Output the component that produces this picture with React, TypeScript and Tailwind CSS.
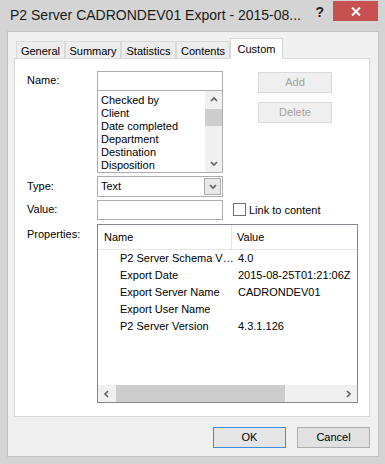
import React from "react";

const FONT = "font-['Liberation_Sans',Arial,sans-serif]";

function Chevron({ dir }: { dir: "up" | "down" | "left" | "right" }) {
  const paths: Record<string, string> = {
    up: "M1 5 L4 2 L7 5",
    down: "M1 2 L4 5 L7 2",
    left: "M5 1 L2 4 L5 7",
    right: "M2 1 L5 4 L2 7",
  };
  return (
    <svg width="8" height="8" viewBox="0 0 8 8">
      <path d={paths[dir]} fill="none" stroke="#606060" strokeWidth="1.6" />
    </svg>
  );
}

function Tab({ label, w, selected }: { label: string; w: string; selected?: boolean }) {
  if (selected) {
    return (
      <div
        className={`${w} h-[21px] bg-white border border-b-0 border-[#d9d9d9] flex items-start justify-center pt-[3px] leading-[14px] relative z-10`}
      >
        {label}
      </div>
    );
  }
  return (
    <div
      className={`${w} h-[18px] bg-[#ededed] border border-[#d9d9d9] flex items-start justify-center pt-[2px] leading-[14px]`}
    >
      {label}
    </div>
  );
}

function DisabledButton({ label }: { label: string }) {
  return (
    <div className="w-[74px] h-[21px] bg-[#efefef] border border-[#d9d9d9] flex items-center justify-center text-[#a3a3a3]">
      {label}
    </div>
  );
}

export default function App() {
  const listItems = ["Checked by", "Client", "Date completed", "Department", "Destination", "Disposition"];
  const rows: [string, string][] = [
    ["P2 Server Schema V…", "4.0"],
    ["Export Date", "2015-08-25T01:21:06Z"],
    ["Export Server Name", "CADRONDEV01"],
    ["Export User Name", ""],
    ["P2 Server Version", "4.3.1.126"],
  ];

  return (
    <div className={`w-[385px] h-[464px] bg-[#d4d4d4] flex flex-col ${FONT} text-[11px] text-black`}>
      {/* Title bar */}
      <div className="h-[31px] flex items-start shrink-0">
        <div className="pl-[10px] pt-[6px] text-[14px] leading-[18px] text-[#1a1a1a] whitespace-nowrap">
          P2 Server CADRONDEV01 Export - 2015-08...
        </div>
        <div className="ml-auto flex items-start">
          <div className="pt-[4px] text-[14px] leading-[16px] font-bold text-[#222]">?</div>
          <div className="ml-[9px] mr-[7px] mt-[1px] w-[45px] h-[20px] bg-[#c75050] flex items-center justify-center">
            <svg width="10" height="9" viewBox="0 0 10 9">
              <path d="M1 0.5 L9 8.5 M9 0.5 L1 8.5" stroke="#ffffff" strokeWidth="2" />
            </svg>
          </div>
        </div>
      </div>

      {/* Client area */}
      <div className="ml-[7px] mr-[6px] mb-[7px] flex-1 bg-[#f0f0f0] border border-[#c2c2c2] flex flex-col pl-[6px] pr-[7px] pt-[6px]">
        {/* Tabs */}
        <div className="flex items-end h-[21px] -mb-px ml-[2px]">
          <Tab label="General" w="w-[49px]" />
          <Tab label="Summary" w="w-[56px]" />
          <Tab label="Statistics" w="w-[55px]" />
          <Tab label="Contents" w="w-[54px]" />
          <Tab label="Custom" w="w-[53px]" selected />
        </div>

        {/* Tab panel */}
        <div className="w-[356px] h-[359px] bg-white border border-[#d9d9d9] pl-[12px] pt-[12px] flex flex-col">
          {/* Name row */}
          <div className="flex">
            <div className="w-[70px] pt-[2px] leading-[15px]">Name:</div>
            <div className="flex flex-col w-[126px]">
              <div className="h-[20px] border border-[#abadb3] bg-white" />
              <div className="h-[82px] border border-t-0 border-[#abadb3] flex">
                <div className="flex-1 pl-[3px] pt-[3px] flex flex-col">
                  {listItems.map((it) => (
                    <div key={it} className="h-[13px] leading-[13px] whitespace-nowrap">
                      {it}
                    </div>
                  ))}
                </div>
                <div className="w-[17px] bg-[#f0f0f0] flex flex-col">
                  <div className="h-[17px] flex items-center justify-center">
                    <Chevron dir="up" />
                  </div>
                  <div className="mt-[1px] h-[17px] bg-[#cdcdcd]" />
                  <div className="flex-1" />
                  <div className="h-[17px] flex items-center justify-center">
                    <Chevron dir="down" />
                  </div>
                </div>
              </div>
            </div>
            <div className="ml-[35px] mt-[1px] flex flex-col gap-[9px]">
              <DisabledButton label="Add" />
              <DisabledButton label="Delete" />
            </div>
          </div>

          {/* Type row */}
          <div className="flex mt-[3px]">
            <div className="w-[70px] pt-[3px] leading-[15px]">Type:</div>
            <div className="w-[126px] h-[21px] border border-[#abadb3] bg-white flex items-center">
              <div className="flex-1 pl-[3px] leading-[15px]">Text</div>
              <div className="w-[17px] h-[17px] mr-[1px] border border-[#acacac] bg-[#e8e8e8] flex items-center justify-center">
                <Chevron dir="down" />
              </div>
            </div>
          </div>

          {/* Value row */}
          <div className="flex mt-[3px]">
            <div className="w-[70px] pt-[2px] leading-[15px]">Value:</div>
            <div className="w-[126px] h-[20px] border border-[#abadb3] bg-white" />
            <div className="ml-[10px] mt-[3px] flex items-start">
              <div className="w-[13px] h-[13px] border border-[#707070] bg-white" />
              <div className="ml-[3px] leading-[14px]">Link to content</div>
            </div>
          </div>

          {/* Properties row */}
          <div className="flex mt-[4px]">
            <div className="w-[70px] pt-[3px] leading-[15px]">Properties:</div>
            <div className="w-[261px] h-[179px] border border-[#828790] bg-white flex flex-col">
              <div className="h-[25px] flex border-b border-[#e5e5e5] shrink-0">
                <div className="w-[134px] border-r border-[#e5e5e5] pl-[6px] flex items-center">Name</div>
                <div className="pl-[5px] flex items-center">Value</div>
              </div>
              <div className="flex flex-col">
                {rows.map(([n, v]) => (
                  <div key={n} className="h-[17px] flex items-center">
                    <div className="w-[140px] pl-[22px] pr-[4px] whitespace-nowrap overflow-hidden">{n}</div>
                    <div className="whitespace-nowrap">{v}</div>
                  </div>
                ))}
              </div>
              <div className="flex-1" />
              <div className="h-[17px] bg-[#f0f0f0] flex shrink-0">
                <div className="w-[17px] flex items-center justify-center">
                  <Chevron dir="left" />
                </div>
                <div className="ml-[1px] w-[169px] bg-[#cdcdcd]" />
                <div className="flex-1" />
                <div className="w-[17px] flex items-center justify-center">
                  <Chevron dir="right" />
                </div>
              </div>
            </div>
          </div>
        </div>

        {/* Dialog buttons */}
        <div className="flex justify-end gap-[11px] mt-[10px] w-[356px]">
          <div className="w-[73px] h-[21px] bg-[#e5e5e5] border border-[#3c8ddb] flex items-center justify-center">
            OK
          </div>
          <div className="w-[73px] h-[21px] bg-[#e1e1e1] border border-[#adadad] flex items-center justify-center">
            Cancel
          </div>
        </div>
      </div>
    </div>
  );
}
